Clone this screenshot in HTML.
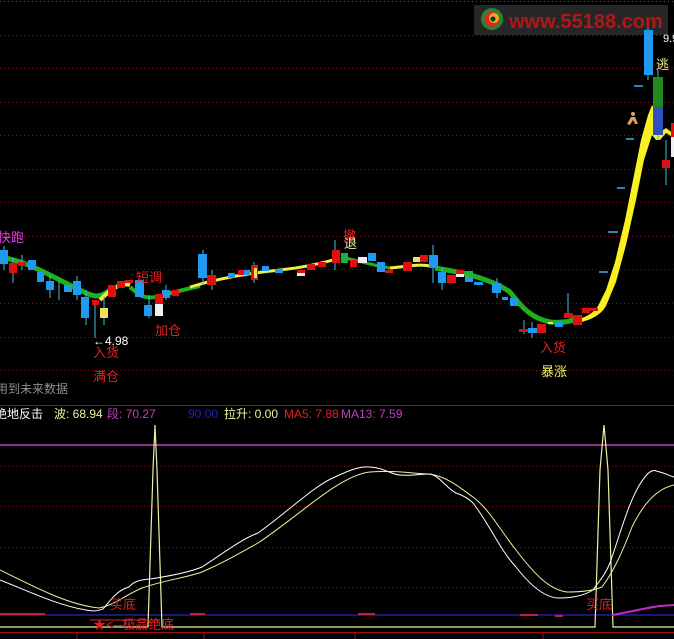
<!DOCTYPE html>
<html><head><meta charset="utf-8"><style>
html,body{margin:0;padding:0;background:#000;}
svg{display:block;}
text{font-family:"Liberation Sans","Noto Sans CJK SC",sans-serif;}
</style></head><body>
<svg width="674" height="639" viewBox="0 0 674 639" xmlns="http://www.w3.org/2000/svg">
<rect width="674" height="639" fill="#000"/>
<g stroke="#7a1010" stroke-dasharray="1,3" stroke-width="1">
<line x1="0" y1="1.5" x2="674" y2="1.5" stroke="#a030a0"/>
<line x1="0" y1="35.5" x2="674" y2="35.5"/>
<line x1="0" y1="68.5" x2="674" y2="68.5"/>
<line x1="0" y1="102.5" x2="674" y2="102.5"/>
<line x1="0" y1="135.5" x2="674" y2="135.5"/>
<line x1="0" y1="169.5" x2="674" y2="169.5"/>
<line x1="0" y1="202.5" x2="674" y2="202.5"/>
<line x1="0" y1="236.5" x2="674" y2="236.5"/>
<line x1="0" y1="269.5" x2="674" y2="269.5"/>
<line x1="0" y1="303.5" x2="674" y2="303.5"/>
<line x1="0" y1="337.5" x2="674" y2="337.5"/>
<line x1="0" y1="370.5" x2="674" y2="370.5"/>
<line x1="0" y1="466.5" x2="674" y2="466.5"/>
<line x1="0" y1="506.5" x2="674" y2="506.5"/>
<line x1="0" y1="547.5" x2="674" y2="547.5"/>
<line x1="0" y1="587.5" x2="674" y2="587.5"/>
</g>
<line x1="0" y1="405.5" x2="674" y2="405.5" stroke="#9a1010"/>
<line x1="0" y1="445" x2="674" y2="445" stroke="#c040c0" stroke-width="1.5"/>
<line x1="0" y1="632.5" x2="674" y2="632.5" stroke="#9a1010"/>
<g stroke="#9a1010"><line x1="77" y1="632" x2="77" y2="639"/><line x1="204" y1="632" x2="204" y2="639"/><line x1="355" y1="632" x2="355" y2="639"/><line x1="543" y1="632" x2="543" y2="639"/></g>

<!-- logo -->
<rect x="474" y="5" width="194" height="30" fill="#262626"/>
<circle cx="492" cy="19" r="11" fill="#1a8a3a"/>
<circle cx="492" cy="19" r="8" fill="#d03020"/>
<circle cx="494" cy="18" r="5" fill="#e0b020"/>
<circle cx="493" cy="19" r="2.5" fill="#262626"/>
<text x="509" y="28" font-size="20" font-weight="bold" fill="#b01818">www.55188.com</text>

<!-- ribbon -->
<path d="M0,257 C30,262 50,276 80,290 C95,298 100,298 110,290" stroke="#1fb01f" stroke-width="5" fill="none"/>
<path d="M100,300 C110,290 120,282 130,285" stroke="#f0f040" stroke-width="4" fill="none"/>
<path d="M130,287 C140,296 145,300 160,296 C175,292 190,288 200,286" stroke="#1fb01f" stroke-width="4" fill="none"/>
<path d="M190,287 C220,278 250,273 280,270 C300,268 320,264 340,258" stroke="#f0f040" stroke-width="3" fill="none"/>
<path d="M345,258 C360,261 375,266 390,268" stroke="#1fb01f" stroke-width="3" fill="none"/>
<path d="M390,268 C410,266 420,264 430,266" stroke="#f0f040" stroke-width="3" fill="none"/>
<path d="M435,268 C460,272 490,278 510,292 C520,305 530,318 550,322 C560,323 570,322 580,318" stroke="#1fb01f" stroke-width="5" fill="none"/>
<path d="M575,320 C588,317 594,312 598,306 L606,290 L615,262 L625,220 L633,180 L641,140 L648,115 L652,105 L656,112 L656,135 L660,132 L666,128 L674,134 L674,138 L666,133 L660,140 L656,140 L652,135 L644,160 L636,200 L626,245 L616,282 L606,306 C600,316 590,320 578,323 Z" fill="#f8f020"/>

<!-- candles -->
<g stroke="#40c0e0" stroke-width="1">
<line x1="4" y1="246" x2="4" y2="270"/><line x1="13" y1="258" x2="13" y2="283"/><line x1="22" y1="255" x2="22" y2="270"/>
<line x1="50" y1="275" x2="50" y2="298"/><line x1="59" y1="282" x2="59" y2="300"/><line x1="77" y1="276" x2="77" y2="300"/>
<line x1="86" y1="290" x2="86" y2="325"/><line x1="95" y1="300" x2="95" y2="338"/><line x1="104" y1="296" x2="104" y2="325"/>
<line x1="149" y1="295" x2="149" y2="318"/><line x1="166" y1="285" x2="166" y2="300"/><line x1="203" y1="250" x2="203" y2="285"/>
<line x1="212" y1="270" x2="212" y2="290"/><line x1="254" y1="262" x2="254" y2="283"/><line x1="335" y1="240" x2="335" y2="270"/>
<line x1="433" y1="245" x2="433" y2="283"/><line x1="442" y1="268" x2="442" y2="290"/><line x1="497" y1="278" x2="497" y2="298"/>
<line x1="524" y1="320" x2="524" y2="334"/><line x1="532" y1="322" x2="532" y2="338"/><line x1="568" y1="293" x2="568" y2="318"/>
<line x1="648" y1="28" x2="648" y2="80"/><line x1="658" y1="70" x2="658" y2="140"/><line x1="666" y1="140" x2="666" y2="185"/>
</g>
<g fill="#1e9bf0">
<rect x="0" y="250" width="8" height="14"/><rect x="28" y="260" width="8" height="10"/><rect x="37" y="272" width="7" height="10"/>
<rect x="46" y="281" width="8" height="9"/><rect x="64" y="285" width="8" height="7"/><rect x="73" y="281" width="8" height="14"/>
<rect x="81" y="297" width="8" height="21"/><rect x="135" y="280" width="9" height="17"/><rect x="144" y="305" width="8" height="11"/>
<rect x="162" y="290" width="8" height="8"/><rect x="198" y="254" width="9" height="24"/><rect x="228" y="273" width="7" height="5"/>
<rect x="242" y="270" width="8" height="5"/><rect x="262" y="266" width="7" height="5"/><rect x="275" y="269" width="8" height="4"/>
<rect x="368" y="253" width="8" height="8"/><rect x="377" y="262" width="8" height="10"/><rect x="429" y="255" width="9" height="13"/>
<rect x="438" y="272" width="8" height="11"/><rect x="465" y="277" width="8" height="5"/><rect x="474" y="282" width="9" height="3"/>
<rect x="492" y="283" width="9" height="10"/><rect x="502" y="297" width="6" height="3"/><rect x="510" y="298" width="8" height="8"/>
<rect x="528" y="328" width="9" height="5"/><rect x="555" y="322" width="8" height="5"/><rect x="644" y="30" width="9" height="45"/>
<rect x="653" y="107" width="10" height="28" fill="#3050c0"/>
</g>
<g fill="#e01010">
<rect x="9" y="263" width="8" height="10"/><rect x="18" y="262" width="8" height="4"/><rect x="92" y="300" width="7" height="5"/>
<rect x="108" y="285" width="8" height="12"/><rect x="117" y="281" width="8" height="7"/><rect x="125" y="280" width="8" height="3"/>
<rect x="155" y="294" width="8" height="10"/><rect x="172" y="290" width="7" height="6"/><rect x="207" y="275" width="9" height="10"/>
<rect x="238" y="270" width="6" height="5"/><rect x="251" y="265" width="7" height="15"/><rect x="297" y="270" width="8" height="3"/>
<rect x="307" y="264" width="8" height="6"/><rect x="318" y="262" width="8" height="5"/><rect x="332" y="250" width="8" height="13"/>
<rect x="350" y="260" width="7" height="7"/><rect x="385" y="270" width="8" height="3"/><rect x="403" y="262" width="9" height="9"/>
<rect x="420" y="255" width="8" height="7"/><rect x="447" y="275" width="9" height="8"/><rect x="456" y="270" width="8" height="4"/>
<rect x="519" y="329" width="9" height="3"/><rect x="537" y="324" width="9" height="9"/><rect x="564" y="313" width="9" height="5"/>
<rect x="573" y="315" width="9" height="10"/><rect x="582" y="308" width="8" height="5"/><rect x="590" y="308" width="8" height="3"/>
<rect x="662" y="160" width="8" height="8"/><rect x="671" y="123" width="3" height="14"/>
</g>
<g fill="#f0f0f0"><rect x="155" y="304" width="8" height="12"/><rect x="297" y="273" width="8" height="3"/><rect x="358" y="257" width="9" height="6"/><rect x="456" y="274" width="8" height="3"/><rect x="671" y="137" width="3" height="20"/></g>
<g fill="#f0e060"><rect x="100" y="308" width="8" height="10"/><rect x="413" y="257" width="7" height="5"/><rect x="548" y="322" width="5" height="2"/><rect x="254" y="268" width="3" height="10"/></g>
<g fill="#20b040"><rect x="341" y="253" width="7" height="10"/><rect x="465" y="271" width="8" height="6"/><rect x="653" y="77" width="10" height="30" fill="#208a20"/></g>
<g stroke="#40b0e0" stroke-width="1.5">
<line x1="634" y1="86" x2="643" y2="86"/><line x1="626" y1="139" x2="634" y2="139"/><line x1="617" y1="188" x2="625" y2="188"/>
<line x1="608" y1="232" x2="618" y2="232"/><line x1="599" y1="272" x2="608" y2="272"/></g>
<g fill="#e0a050"><circle cx="633" cy="114" r="2"/><path d="M631,117 L635,117 L638,124 L635,124 L633,120 L630,125 L627,124 Z"/></g>

<!-- labels -->
<g font-size="13">
<text x="-2" y="242" fill="#e040e0">快跑</text>
<text x="136" y="282" fill="#e02020">短调</text>
<text x="155" y="335" fill="#e02020">加仓</text>
<text x="93" y="345" fill="#fff" font-size="12">←4.98</text>
<text x="93" y="357" fill="#e02020">入货</text>
<text x="93" y="381" fill="#e02020">满仓</text>
<text x="-4" y="393" fill="#909090" font-size="12">用到未来数据</text>
<text x="343" y="240" fill="#e02020">撤</text>
<text x="344" y="248" fill="#f0f0a0">退</text>
<text x="540" y="352" fill="#e02020">入货</text>
<text x="541" y="376" fill="#f0f060">暴涨</text>
<text x="663" y="42" fill="#fff" font-size="11">9.9</text>
<text x="656" y="69" fill="#f0f0a0">逃</text>
</g>

<!-- lower header -->
<g font-size="12">
<text x="-5" y="418" fill="#fff">绝地反击</text>
<text x="54" y="418" fill="#f0f0a0">波: 68.94</text>
<text x="107" y="418" fill="#c040c0">段: 70.27</text>
<text x="188" y="418" fill="#2020c0">90.00</text>
<text x="224" y="418" fill="#f0f0a0">拉升: 0.00</text>
<text x="284" y="418" fill="#e02020">MA5: 7.88</text>
<text x="341" y="418" fill="#c040c0">MA13: 7.59</text>
</g>

<!-- lower lines -->
<line x1="0" y1="615" x2="674" y2="615" stroke="#2020a0" stroke-width="1.5"/>
<path d="M0,627 L148,627 L153,470 L155,425 L157,470 L162,627 L595,627 L600,470 L604,425 L608,470 L613,627 L674,627" stroke="#f0f0a0" stroke-width="1.2" fill="none"/>
<path d="M0,570 C40,590 70,605 99,608 C115,605 125,595 142,588 C165,580 185,578 202,572 C225,562 240,553 258,543 C300,515 340,475 370,472 C400,470 415,474 430,474 C450,478 460,488 473,497 C490,510 500,530 516,550 C535,575 550,590 567,592 C585,592 595,590 602,587 C615,570 625,545 632,527 C645,500 660,488 674,485" stroke="#f0f0a0" stroke-width="1" fill="none"/>
<path d="M0,580 C30,592 60,606 86,610 C95,612 100,610 103,609 C112,598 118,590 129,587 C135,580 142,580 150,579 C170,576 190,572 202,567 C225,552 240,540 258,533 C290,510 315,485 335,477 C350,470 360,466 370,467 C385,468 392,475 400,475 C412,476 420,474 430,474 C440,476 446,488 456,493 C465,496 470,500 473,503 C490,525 500,550 516,567 C530,585 545,598 559,598 C575,598 585,595 593,590 C600,580 605,575 610,563 C620,535 630,495 645,477 C650,470 655,470 656,471 C665,473 670,476 674,477" stroke="#ffffff" stroke-width="1" fill="none"/>
<g stroke="#c02040" stroke-width="2"><line x1="0" y1="614" x2="45" y2="614"/><line x1="190" y1="614" x2="205" y2="614"/><line x1="358" y1="614" x2="375" y2="614"/><line x1="520" y1="615" x2="538" y2="615"/><line x1="555" y1="616" x2="563" y2="616"/></g>
<path d="M612,615 C630,612 645,608 660,606 L674,605" stroke="#c030c0" stroke-width="2" fill="none"/>
<line x1="90" y1="620" x2="160" y2="620" stroke="#e02020"/>
<g font-size="13" fill="#e02020">
<text x="110" y="609">买底</text>
<text x="586" y="609">买底</text>
<text x="93" y="629">★&lt;--极品绝底</text>
</g>
</svg>
</body></html>
